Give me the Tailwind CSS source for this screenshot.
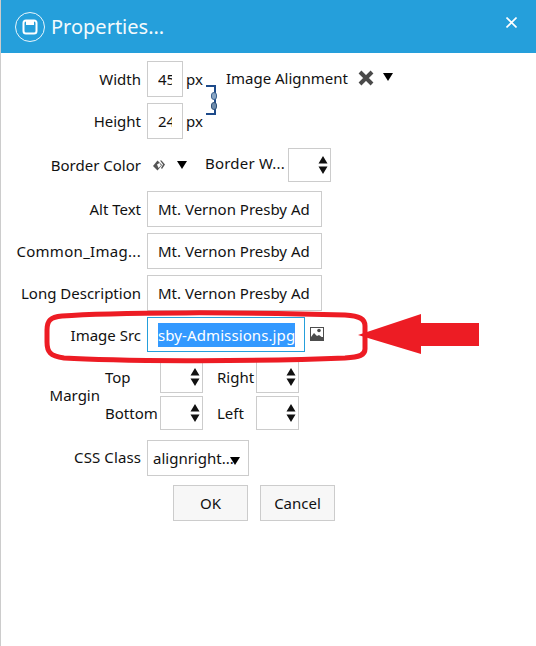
<!DOCTYPE html>
<html lang="en">
  <head>
    <meta charset="UTF-8" />
    <title>Properties</title>
    <script src="https://cdn.jsdelivr.net/npm/@tailwindcss/browser@4"></script>
  </head>
  <body class="bg-white font-['Noto_Sans',sans-serif] text-[15px] text-[#111] overflow-hidden">
    <div class="relative w-[536px] h-[646px] border-l border-[#ccc]">
      <!-- title bar -->
      <header class="h-[53px] bg-[#259fdb] flex items-center pl-[14px] pr-[19px] text-white">
        <span class="w-[30px] h-[30px] rounded-full border border-white/90 flex items-center justify-center">
          <svg width="16" height="16" viewBox="0 0 16 16" fill="none">
            <rect x="1.5" y="1.5" width="13" height="13" rx="2.5" stroke="white" stroke-width="2" />
            <rect x="4" y="2" width="8" height="4" fill="white" />
          </svg>
        </span>
        <span class="ml-[6px] text-[20px] flex-1 opacity-95 leading-none">Properties...</span>
        <svg class="mb-[8px]" width="11" height="11" viewBox="0 0 11 11" stroke="white" stroke-width="1.6"><path d="M0.500 0.500l10 10M10.500 0.500l-10 10" /></svg>
      </header>

      <!-- size rows -->
      <div class="flex mt-[8px]">
        <div class="flex flex-col gap-[6px]">
          <div class="flex items-center h-[36px]">
            <label class="w-[140px] text-right pr-0">Width</label>
            <input value="45" class="ml-[6px] w-[36px] h-[36px] border border-[#ccc] pl-[10px] pr-[10px] text-[15px] outline-none" />
            <span class="ml-[3px]">px</span>
          </div>
          <div class="flex items-center h-[36px]">
            <label class="w-[140px] text-right">Height</label>
            <input value="24" class="ml-[6px] w-[36px] h-[36px] border border-[#ccc] pl-[10px] pr-[10px] text-[15px] outline-none" />
            <span class="ml-[3px]">px</span>
          </div>
        </div>
        <!-- aspect lock bracket -->
        <div class="relative w-[10px] h-[30px] mt-[24px] ml-[3px] border-y-2 border-r-2 border-[#1d4a8a]">
          <span class="absolute right-[-3px] top-[5px] w-[6px] h-[8px] rounded-sm bg-[#8aa6c4] border border-[#3e6491]"></span>
          <span class="absolute right-[-3px] top-[15px] w-[6px] h-[8px] rounded-sm bg-[#6f8cab] border border-[#2f5179]"></span>
        </div>
        <div class="flex items-start ml-[-4px] mt-[6px]">
          <span class="ml-[14px]">Image Alignment</span>
          <svg class="ml-[10px] mt-[3px]" width="16" height="16" viewBox="0 0 16 16" stroke="#4a4a4a" stroke-width="4"><path d="M2 2l12 12M14 2L2 14" /></svg>
          <svg class="ml-[9px] mt-[6px]" width="10" height="8" viewBox="0 0 10 8" fill="#000"><path d="M0 0h10L5 8z" /></svg>
        </div>
      </div>

      <!-- border row -->
      <div class="flex items-center mt-[9px] h-[34px]">
        <label class="w-[140px] text-right">Border Color</label>
        <svg class="ml-[11px]" width="13" height="11" viewBox="0 0 13 11"><path d="M5.500 0.500L10 5 5.500 10.500 1 6z" fill="#555" /><path d="M5 4.500L7.500 3 9 5.500 6.500 8z" fill="#fff" /><path d="M8 0.500h1.500L13 4.500 10 9 9 8l2-3.500z" fill="#555" /></svg>
        <svg class="ml-[12px]" width="10" height="8" viewBox="0 0 10 8" fill="#000"><path d="M0 0h10L5 8z" /></svg>
        <span class="ml-[18px] pb-[4px] tracking-[0.2px]">Border W...</span>
        <div class="ml-[3px] w-[43px] h-[34px] border border-[#ccc] flex justify-end items-center pr-[2px]">
          <svg width="10" height="18" viewBox="0 0 10 18" fill="#111"><path d="M5 0l4.500 7.500h-9zM5 18l4.500-7.500h-9z" /></svg>
        </div>
      </div>

      <!-- text rows -->
      <div class="flex flex-col gap-[6px] mt-[9px]">
        <div class="flex items-center">
          <label class="w-[140px] text-right">Alt Text</label>
          <input value="Mt. Vernon Presby Ad" class="ml-[6px] w-[175px] h-[36px] border border-[#ccc] px-[10px] text-[15px] outline-none" />
        </div>
        <div class="flex items-center">
          <label class="w-[140px] text-right tracking-[0.3px]">Common_Imag...</label>
          <input value="Mt. Vernon Presby Ad" class="ml-[6px] w-[175px] h-[36px] border border-[#ccc] px-[10px] text-[15px] outline-none" />
        </div>
        <div class="flex items-center">
          <label class="w-[140px] text-right">Long Description</label>
          <input value="Mt. Vernon Presby Ad" class="ml-[6px] w-[175px] h-[36px] border border-[#ccc] px-[10px] text-[15px] outline-none" />
        </div>
        <div class="flex items-center">
          <label class="w-[140px] text-right pt-[2px]">Image Src</label>
          <div class="ml-[6px] w-[158px] h-[35px] border border-[#259fdb] pl-[10px] flex items-center overflow-hidden">
            <span class="bg-[#3399ff] text-white leading-[23px] whitespace-nowrap pt-[1px] tracking-[0.1px]">sby-Admissions.jpg</span>
          </div>
          <svg class="ml-[5px] mb-[2px]" width="14" height="14" viewBox="0 0 14 14"><rect width="14" height="14" fill="#4d4d4d" /><rect x="1" y="1" width="12" height="9" fill="#fff" /><circle cx="9" cy="3.500" r="1.800" fill="#4d4d4d" /><path d="M1 10l3-4 3 3 2-1 4 3v3H1z" fill="#4d4d4d" /></svg>
        </div>
      </div>

      <!-- margin -->
      <div class="flex items-center mt-[8px]">
        <label class="w-[99px] text-right">Margin</label>
        <div class="grid grid-cols-[55px_43px_53px_43px] gap-y-[3px] ml-[5px] items-center">
          <span class="pt-[2px]">Top</span>
          <div class="h-[33px] border border-[#ccc] flex justify-end items-center pr-[2px]">
            <svg width="10" height="18" viewBox="0 0 10 18" fill="#111"><path d="M5 0l4.500 7.500h-9zM5 18l4.500-7.500h-9z" /></svg>
          </div>
          <span class="pl-[14px] pt-[2px]">Right</span>
          <div class="h-[33px] border border-[#ccc] flex justify-end items-center pr-[2px]">
            <svg width="10" height="18" viewBox="0 0 10 18" fill="#111"><path d="M5 0l4.500 7.500h-9zM5 18l4.500-7.500h-9z" /></svg>
          </div>
          <span>Bottom</span>
          <div class="h-[34px] border border-[#ccc] flex justify-end items-center pr-[2px]">
            <svg width="10" height="18" viewBox="0 0 10 18" fill="#111"><path d="M5 0l4.500 7.500h-9zM5 18l4.500-7.500h-9z" /></svg>
          </div>
          <span class="pl-[14px]">Left</span>
          <div class="h-[34px] border border-[#ccc] flex justify-end items-center pr-[2px]">
            <svg width="10" height="18" viewBox="0 0 10 18" fill="#111"><path d="M5 0l4.500 7.500h-9zM5 18l4.500-7.500h-9z" /></svg>
          </div>
        </div>
      </div>

      <!-- css class -->
      <div class="flex items-center mt-[10px]">
        <label class="w-[140px] text-right pb-[2px] tracking-[0.1px]">CSS Class</label>
        <div class="ml-[6px] w-[102px] h-[36px] border border-[#ccc] flex items-center pl-[5px] relative">
          <span>alignright...</span>
          <svg class="absolute right-[8px] top-[16px]" width="10" height="8" viewBox="0 0 10 8" fill="#000"><path d="M0 0h10L5 8z" /></svg>
        </div>
      </div>

      <!-- buttons -->
      <div class="flex mt-[9px] ml-[172px] gap-[12px]">
        <button class="w-[75px] h-[36px] bg-[#f7f7f7] border border-[#ccc]">OK</button>
        <button class="w-[75px] h-[36px] bg-[#f7f7f7] border border-[#ccc]">Cancel</button>
      </div>

      <!-- red annotation drawn over the dialog -->
      <svg class="absolute left-[-1px] top-0 pointer-events-none" width="536" height="646" viewBox="0 0 536 646" fill="none">
        <path d="M62 316C110 312 250 312 345 315C360 316 365 319 365 326V349C365 355 360 357 345 358C250 362 110 361 64 358C50 356 47 352 47 342V330C47 321 50 317 62 316Z" stroke="#ed1c24" stroke-width="5" />
        <path d="M358 335L421 314V323H479V346H421V354Z" fill="#ed1c24" />
      </svg>
    </div>
  </body>
</html>
